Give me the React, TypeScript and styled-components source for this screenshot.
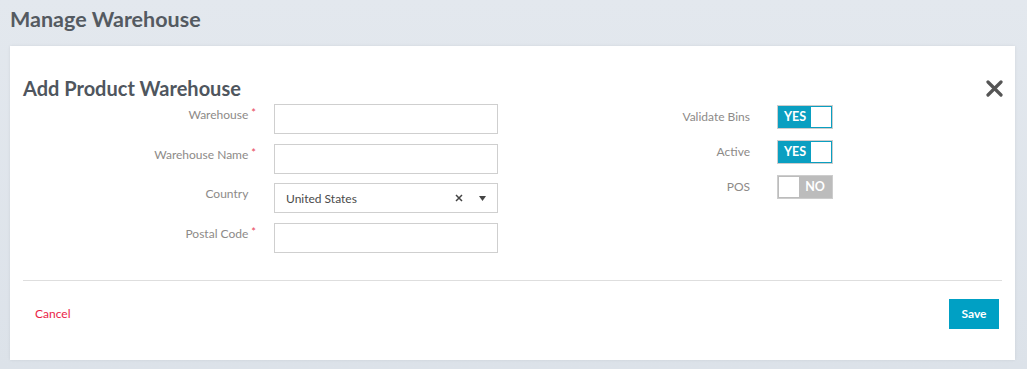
import React from "react";
import styled, { createGlobalStyle } from "styled-components";

const GlobalStyle = createGlobalStyle`
  html, body {
    margin: 0;
    padding: 0;
    background: #dfe4eb;
    font-family: Lato, "Open Sans", Arial, sans-serif;
  }
`;

const Page = styled.div`
  width: 1027px;
  height: 369px;
  background: linear-gradient(#e3e8ee, #dce2e9);
  overflow: hidden;
`;

const PageTitle = styled.h1`
  margin: 0;
  height: 46px;
  padding: 3px 10px 0;
  box-sizing: border-box;
  font-size: 21.5px;
  line-height: 32px;
  font-weight: 700;
  color: #545a61;
`;

const Card = styled.section`
  margin: 0 12px 0 10px;
  height: 314px;
  box-sizing: border-box;
  padding: 29px 13px 0;
  background: #fff;
  box-shadow: 0 0 3px rgba(0, 0, 0, 0.08);
`;

const CardHeader = styled.div`
  display: flex;
  justify-content: space-between;
  align-items: center;
  height: 26px;
`;

const CardTitle = styled.h2`
  margin: 0;
  font-size: 20px;
  line-height: 26px;
  font-weight: 700;
  color: #4f565e;
`;

const CloseButton = styled.button`
  border: 0;
  background: none;
  padding: 0;
  margin-right: -1px;
  width: 17px;
  height: 17px;
  cursor: pointer;
  display: flex;
`;

const FormArea = styled.div`
  display: flex;
  margin-top: 3px;
`;

const LeftGrid = styled.div`
  display: grid;
  grid-template-columns: 233px 224px;
  column-gap: 18px;
  row-gap: 9.5px;
`;

const RightGrid = styled.div`
  margin-left: 102px;
  display: grid;
  grid-template-columns: 150px 56px;
  column-gap: 27px;
  row-gap: 11px;
  align-content: start;
  padding-top: 1px;
`;

const FieldLabel = styled.label`
  text-align: right;
  font-size: 12px;
  line-height: 16px;
  padding-top: 3px;
  color: #8d8a88;
`;

const SideLabel = styled(FieldLabel)`
  padding-top: 0;
  align-self: center;
`;

const Required = styled.span<{ $hidden?: boolean }>`
  color: #e8455a;
  font-size: 11px;
  vertical-align: top;
  margin-left: 3px;
  position: relative;
  top: -2px;
  visibility: ${(p) => (p.$hidden ? "hidden" : "visible")};
`;

const TextInput = styled.input`
  height: 30px;
  box-sizing: border-box;
  border: 1px solid #cfcfcf;
  padding: 0 11px;
  font-family: inherit;
  font-size: 12px;
  color: #444;
  outline: none;
`;

const Select = styled.div`
  height: 30px;
  box-sizing: border-box;
  border: 1px solid #cfcfcf;
  display: flex;
  align-items: center;
  padding: 0 11px 0 11px;
  font-size: 12px;
  color: #4a4a4a;
`;

const SelectValue = styled.span`
  flex: 1;
`;

const SelectIcon = styled.span`
  display: flex;
  margin-left: 16px;
`;

const Toggle = styled.div<{ $on: boolean }>`
  width: 56px;
  height: 24px;
  box-sizing: border-box;
  border: 1px solid #cdcdcd;
  padding: 1px;
  display: flex;
  flex-direction: ${(p) => (p.$on ? "row" : "row-reverse")};
  background: ${(p) => (p.$on ? "#0a9fc1" : "#bcbcbc")};
`;

const ToggleText = styled.span`
  flex: 1;
  color: #fff;
  font-size: 12.5px;
  font-weight: 700;
  line-height: 20px;
  text-align: center;
`;

const Knob = styled.span`
  width: 20px;
  height: 20px;
  background: #fff;
`;

const Divider = styled.hr`
  margin: 27px 0 0;
  border: 0;
  border-top: 1px solid #dedede;
`;

const Footer = styled.div`
  display: flex;
  justify-content: space-between;
  align-items: center;
  padding: 18px 3px 0 12px;
`;

const CancelLink = styled.a`
  color: #ea1d47;
  font-size: 12px;
  text-decoration: none;
  cursor: pointer;
`;

const SaveButton = styled.button`
  width: 50px;
  height: 30px;
  border: 0;
  background: #00a0c4;
  color: #fff;
  font-family: inherit;
  font-size: 12px;
  font-weight: 700;
  cursor: pointer;
`;

const fields = [
  { label: "Warehouse", required: true },
  { label: "Warehouse Name", required: true },
  { label: "Country", required: false, select: "United States" },
  { label: "Postal Code", required: true },
];

const toggles = [
  { label: "Validate Bins", on: true },
  { label: "Active", on: true },
  { label: "POS", on: false },
];

const App: React.FC = () => {
  return (
    <Page>
      <GlobalStyle />
      <PageTitle>Manage Warehouse</PageTitle>
      <Card>
        <CardHeader>
          <CardTitle>Add Product Warehouse</CardTitle>
          <CloseButton aria-label="Close">
            <svg width="17" height="17" viewBox="0 0 17 17">
              <path d="M2 2 L15 15 M15 2 L2 15" stroke="#555" strokeWidth="3.2" strokeLinecap="round" />
            </svg>
          </CloseButton>
        </CardHeader>
        <FormArea>
          <LeftGrid>
            {fields.map((f) => (
              <React.Fragment key={f.label}>
                <FieldLabel>
                  {f.label}
                  <Required $hidden={!f.required}>*</Required>
                </FieldLabel>
                {f.select ? (
                  <Select>
                    <SelectValue>{f.select}</SelectValue>
                    <SelectIcon>
                      <svg width="8" height="8" viewBox="0 0 8 8">
                        <path d="M1 1 L7 7 M7 1 L1 7" stroke="#444" strokeWidth="1.5" />
                      </svg>
                    </SelectIcon>
                    <SelectIcon>
                      <svg width="7" height="5" viewBox="0 0 7 5">
                        <path d="M0 0 H7 L3.5 5 Z" fill="#444" />
                      </svg>
                    </SelectIcon>
                  </Select>
                ) : (
                  <TextInput />
                )}
              </React.Fragment>
            ))}
          </LeftGrid>
          <RightGrid>
            {toggles.map((t) => (
              <React.Fragment key={t.label}>
                <SideLabel>{t.label}</SideLabel>
                <Toggle $on={t.on}>
                  <ToggleText>{t.on ? "YES" : "NO"}</ToggleText>
                  <Knob />
                </Toggle>
              </React.Fragment>
            ))}
          </RightGrid>
        </FormArea>
        <Divider />
        <Footer>
          <CancelLink>Cancel</CancelLink>
          <SaveButton>Save</SaveButton>
        </Footer>
      </Card>
    </Page>
  );
};

export default App;
